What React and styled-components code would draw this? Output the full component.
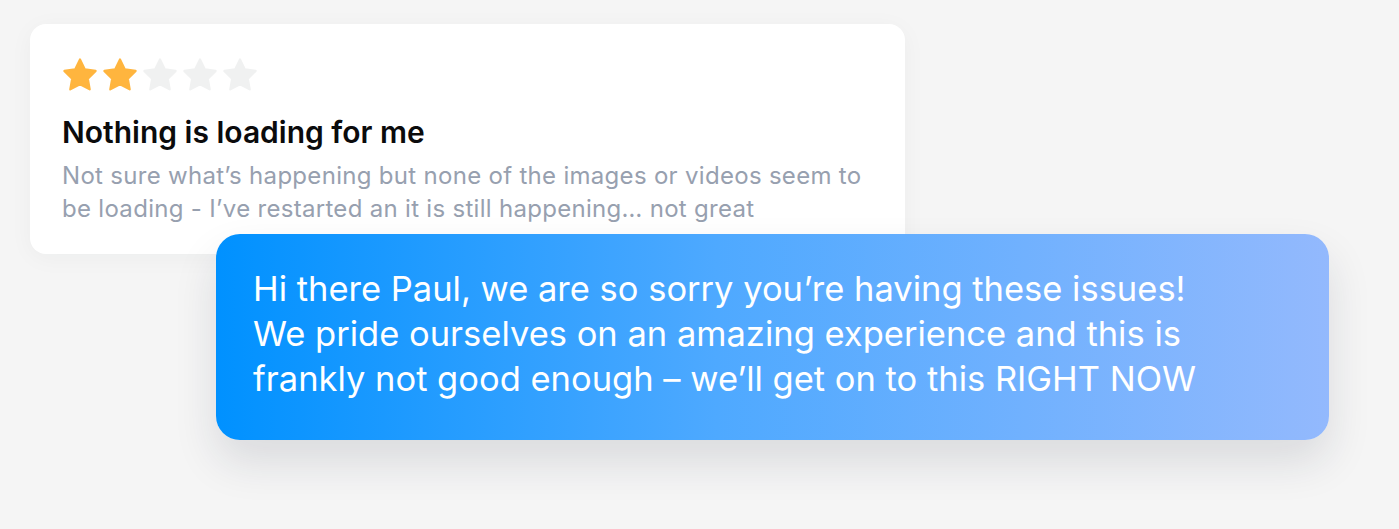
import React from 'react'
import styled, { createGlobalStyle } from 'styled-components'

const GlobalStyle = createGlobalStyle`
  html, body {
    margin: 0;
    background: #f5f5f5;
  }
  body {
    font-family: Inter, 'Noto Sans', sans-serif;
    -webkit-font-smoothing: antialiased;
  }
`

const Page = styled.main`
  display: flex;
  flex-direction: column;
  align-items: flex-start;
  padding: 24px 30px;
  min-height: 529px;
  box-sizing: border-box;
`

const ReviewCard = styled.section`
  width: 875px;
  height: 230px;
  box-sizing: border-box;
  background: #fff;
  border-radius: 16px;
  padding: 33px 32px 0 32px;
  box-shadow: 0 4px 24px rgba(30, 40, 60, 0.04);
`

const Stars = styled.div`
  display: flex;
  gap: 2px;
  height: 36px;
  margin-left: -1px;
`

const Title = styled.h2`
  margin: 21px 0 9px 0;
  font-size: 30px;
  line-height: 36px;
  font-weight: 600;
  color: #0b0b0c;
`

const Body = styled.p`
  margin: 0;
  font-size: 24px;
  line-height: 33px;
  letter-spacing: 0.3px;
  font-weight: 400;
  color: #97a0af;
`

const Reply = styled.div`
  position: relative;
  z-index: 1;
  margin: -20px 0 0 186px;
  width: 1113px;
  box-sizing: border-box;
  padding: 32px 37px 39px 37px;
  border-radius: 24px;
  background: linear-gradient(90deg, #0091ff 0%, #4ea9ff 45%, #93b9fd 100%);
  box-shadow: 0 22px 44px rgba(25, 35, 60, 0.12);
`

const ReplyText = styled.p`
  margin: 0;
  max-width: 968px;
  font-size: 34.5px;
  line-height: 45px;
  font-weight: 400;
  color: #fff;
`

const Star = ({ filled }) => (
  <svg width="38" height="36" viewBox="0 0 24 23" aria-hidden="true">
    <path
      d="M12 1.6l3.1 6.3 6.9 1-5 4.9 1.2 6.9L12 17.4l-6.2 3.3L7 13.8 2 8.9l6.9-1z"
      fill={filled ? '#ffb53e' : '#f0f1f1'}
      stroke={filled ? '#ffb53e' : '#f0f1f1'}
      strokeWidth="1.4"
      strokeLinejoin="round"
    />
  </svg>
)

const rating = 2

export default function App() {
  return (
    <>
      <GlobalStyle />
      <Page>
        <ReviewCard>
          <Stars>
            {[1, 2, 3, 4, 5].map((n) => (
              <Star key={n} filled={n <= rating} />
            ))}
          </Stars>
          <Title>Nothing is loading for me</Title>
          <Body>
            Not sure what’s happening but none of the images or videos seem to be loading - I’ve
            restarted an it is still happening… not great
          </Body>
        </ReviewCard>
        <Reply>
          <ReplyText>
            Hi there Paul, we are so sorry you’re having these issues! We pride ourselves on an
            amazing experience and this is frankly not good enough – we’ll get on to this RIGHT NOW
          </ReplyText>
        </Reply>
      </Page>
    </>
  )
}
